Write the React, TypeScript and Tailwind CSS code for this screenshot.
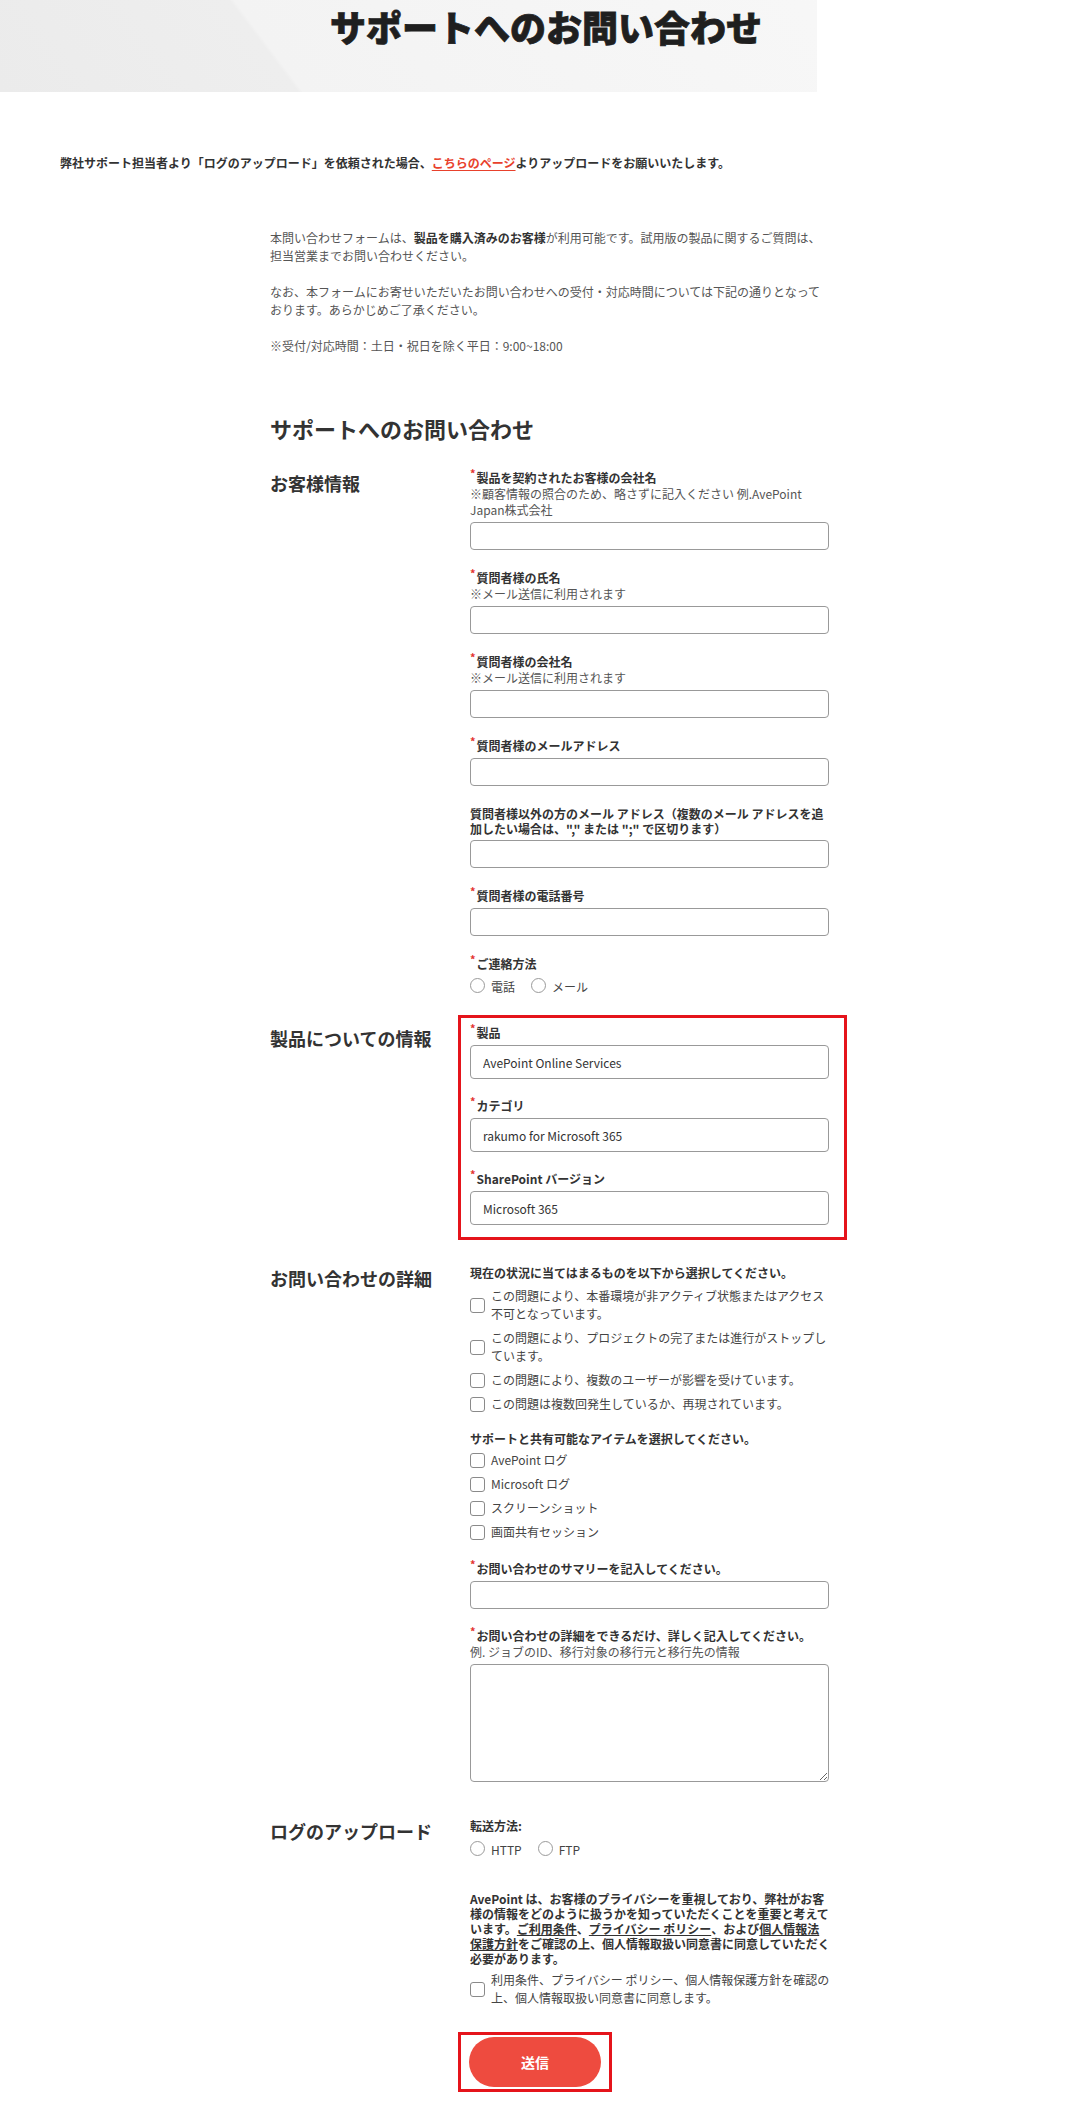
import type { ReactNode } from "react";

function Req() {
  return <span className="relative -top-[2px] mr-[1px] align-top text-[11px] leading-none text-[#e3342f]">*</span>;
}

function Label({ req, children }: { req?: boolean; children: ReactNode }) {
  return (
    <div className="whitespace-nowrap text-[12px] font-bold leading-[16px] text-[#333]">
      {req && <Req />}
      {children}
    </div>
  );
}

function Note({ children }: { children: ReactNode }) {
  return <div className="whitespace-nowrap text-[12px] leading-[16px] text-[#555]">{children}</div>;
}

function TextInput({ value, tall }: { value?: string; tall?: boolean }) {
  return (
    <input
      type="text"
      readOnly
      defaultValue={value}
      className={`mt-[4px] block w-full rounded-[4px] border border-[#999] bg-white px-[12px] text-[12px] text-[#333] outline-none ${
        tall ? "h-[34px]" : "h-[28px]"
      }`}
    />
  );
}

function Field({ req, label, note, value, tall }: { req?: boolean; label: ReactNode; note?: ReactNode; value?: string; tall?: boolean }) {
  return (
    <div>
      <Label req={req}>{label}</Label>
      {note && <Note>{note}</Note>}
      <TextInput value={value} tall={tall} />
    </div>
  );
}

function Box() {
  return <span className="h-[15px] w-[15px] shrink-0 rounded-[3px] border border-[#8a8a8a] bg-white" />;
}

function Check({ children }: { children: ReactNode }) {
  return (
    <label className="flex items-center gap-[6px]">
      <Box />
      <span className="whitespace-nowrap text-[12px] leading-[18px] text-[#444]">{children}</span>
    </label>
  );
}

function Radio({ children }: { children: ReactNode }) {
  return (
    <label className="mr-[16px] flex items-center gap-[6px]">
      <span className="h-[15px] w-[15px] rounded-full border border-[#9a9a9a] bg-white" />
      <span className="mt-[3px] text-[12px] leading-[18px] text-[#444]">{children}</span>
    </label>
  );
}

function Section({ title, children, className = "" }: { title: string; children: ReactNode; className?: string }) {
  return (
    <section className={`flex ${className}`}>
      <h3 className="mt-[1px] w-[200px] shrink-0 text-[18px] font-bold leading-[24px] text-[#333]">{title}</h3>
      <div className="w-[359px]">{children}</div>
    </section>
  );
}

export default function App() {
  return (
    <div className="min-h-[2109px] bg-white pb-[18px] font-['Noto_Sans_CJK_JP',sans-serif] text-[#333]">
      <header className="h-[92px] bg-[linear-gradient(90deg,transparent_0,transparent_817px,#fff_817px),linear-gradient(53deg,#ebebeb_0%,#eeeeee_26%,#f3f3f3_26.4%,#f9f9f9_100%)] pl-[13px] pt-[4px] text-center">
        <h1 className="text-[36px] font-black leading-[44px] text-[#1f1f1f] [-webkit-text-stroke:0.8px_#1f1f1f]">サポートへのお問い合わせ</h1>
      </header>

      <p className="mt-[62px] pl-[60px] text-[12px] font-bold leading-[18px] text-[#333]">
        弊社サポート担当者より「ログのアップロード」を依頼された場合、
        <a href="#" className="text-[#e8412c] underline underline-offset-2">こちらのページ</a>
        よりアップロードをお願いいたします。
      </p>

      <main className="ml-[270px] w-[559px]">
        <div className="mt-[57px] whitespace-nowrap text-[12px] leading-[18px] text-[#555]">
          <p>
            本問い合わせフォームは、<b className="text-[#333]">製品を購入済みのお客様</b>が利用可能です。試用版の製品に関するご質問は、
            <br />
            担当営業までお問い合わせください。
          </p>
          <p className="mt-[18px]">
            なお、本フォームにお寄せいただいたお問い合わせへの受付・対応時間については下記の通りとなって
            <br />
            おります。あらかじめご了承ください。
          </p>
          <p className="mt-[18px]">※受付/対応時間：土日・祝日を除く平日：9:00~18:00</p>
        </div>

        <h2 className="mt-[58px] text-[22px] font-bold leading-[30px] text-[#333]">サポートへのお問い合わせ</h2>

        <Section title="お客様情報" className="mt-[27px]">
          <div className="flex flex-col gap-[20px]">
            <Field
              req
              label="製品を契約されたお客様の会社名"
              note={
                <>
                  ※顧客情報の照合のため、略さずに記入ください 例.AvePoint
                  <br />
                  Japan株式会社
                </>
              }
            />
            <Field req label="質問者様の氏名" note="※メール送信に利用されます" />
            <Field req label="質問者様の会社名" note="※メール送信に利用されます" />
            <Field req label="質問者様のメールアドレス" />
            <div>
              <div className="whitespace-nowrap text-[12px] font-bold leading-[15px] text-[#333]">
                質問者様以外の方のメール アドレス（複数のメール アドレスを追
                <br />
                加したい場合は、&quot;,&quot; または &quot;;&quot; で区切ります）
              </div>
              <TextInput />
            </div>
            <Field req label="質問者様の電話番号" />
            <div>
              <Label req>ご連絡方法</Label>
              <div className="mt-[3px] flex">
                <Radio>電話</Radio>
                <Radio>メール</Radio>
              </div>
            </div>
          </div>
        </Section>

        <Section title="製品についての情報" className="mt-[29px]">
          <div className="relative flex flex-col gap-[19px]">
            <Field req label="製品" value="AvePoint Online Services" tall />
            <Field req label="カテゴリ" value="rakumo for Microsoft 365" tall />
            <Field req label="SharePoint バージョン" value="Microsoft 365" tall />
            <div className="pointer-events-none absolute -bottom-[15px] -left-[12px] -right-[18px] -top-[10px] border-[3px] border-[#e5141b]" />
          </div>
        </Section>

        <Section title="お問い合わせの詳細" className="mt-[40px]">
          <Label>現在の状況に当てはまるものを以下から選択してください。</Label>
          <div className="mt-[6px] flex flex-col gap-[6px]">
            <Check>
              この問題により、本番環境が非アクティブ状態またはアクセス
              <br />
              不可となっています。
            </Check>
            <Check>
              この問題により、プロジェクトの完了または進行がストップし
              <br />
              ています。
            </Check>
            <Check>この問題により、複数のユーザーが影響を受けています。</Check>
            <Check>この問題は複数回発生しているか、再現されています。</Check>
          </div>

          <div className="mt-[18px]">
            <Label>サポートと共有可能なアイテムを選択してください。</Label>
          </div>
          <div className="mt-[4px] flex flex-col gap-[6px]">
            <Check>AvePoint ログ</Check>
            <Check>Microsoft ログ</Check>
            <Check>スクリーンショット</Check>
            <Check>画面共有セッション</Check>
          </div>

          <div className="mt-[20px]">
            <Field req label="お問い合わせのサマリーを記入してください。" />
          </div>
          <div className="mt-[19px]">
            <Label req>お問い合わせの詳細をできるだけ、詳しく記入してください。</Label>
            <Note>例. ジョブのID、移行対象の移行元と移行先の情報</Note>
            <textarea
              readOnly
              className="mt-[4px] block h-[118px] w-full rounded-[4px] border border-[#999] bg-white text-[12px] outline-none"
            />
          </div>
        </Section>

        <Section title="ログのアップロード" className="mt-[36px]">
          <Label>転送方法:</Label>
          <div className="mt-[4px] flex">
            <Radio>HTTP</Radio>
            <Radio>FTP</Radio>
          </div>

          <p className="mt-[32px] whitespace-nowrap text-[12px] font-bold leading-[15px] text-[#333]">
            AvePoint は、お客様のプライバシーを重視しており、弊社がお客
            <br />
            様の情報をどのように扱うかを知っていただくことを重要と考えて
            <br />
            います。<a href="#" className="underline">ご利用条件</a>、
            <a href="#" className="underline">プライバシー ポリシー</a>、および
            <a href="#" className="underline">個人情報法</a>
            <br />
            <a href="#" className="underline">保護方針</a>をご確認の上、個人情報取扱い同意書に同意していただく
            <br />
            必要があります。
          </p>
          <div className="mt-[5px]">
            <Check>
              利用条件、プライバシー ポリシー、個人情報保護方針を確認の
              <br />
              上、個人情報取扱い同意書に同意します。
            </Check>
          </div>
        </Section>

        <div className="ml-[199px] mt-[30px] w-fit">
          <div className="relative">
            <button className="h-[50px] w-[132px] rounded-full bg-[#ee4b3f] text-[14px] font-bold text-white">送信</button>
            <div className="pointer-events-none absolute -bottom-[5px] -left-[11px] -right-[11px] -top-[5px] border-[3px] border-[#e5141b]" />
          </div>
        </div>
      </main>
    </div>
  );
}
